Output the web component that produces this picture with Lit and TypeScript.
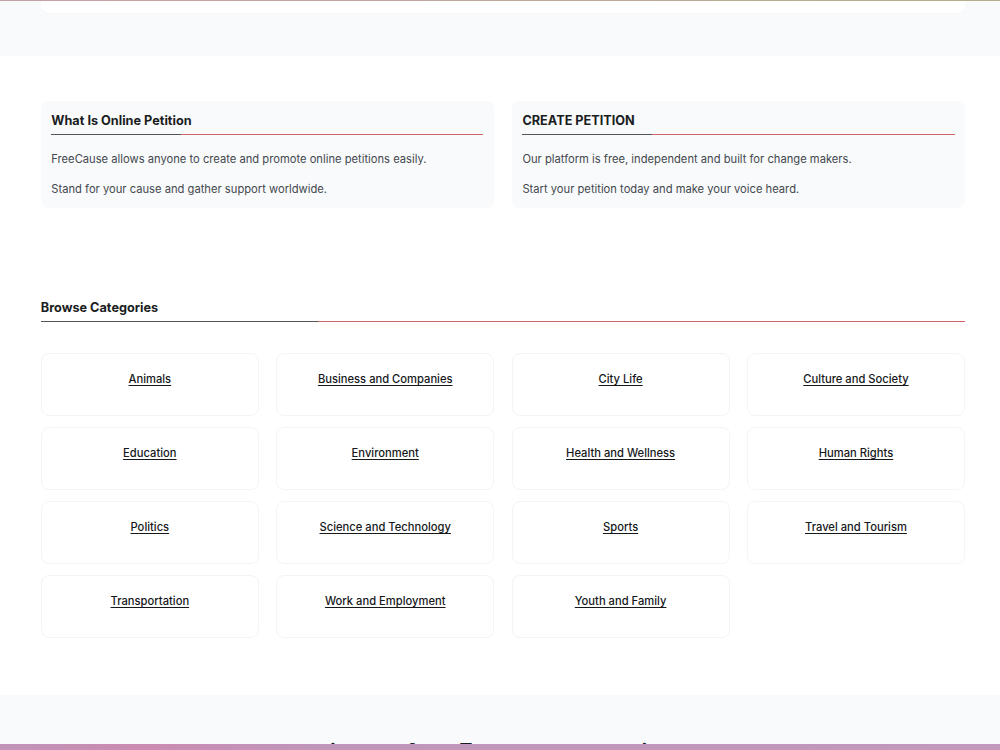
import { html, css, LitElement } from 'lit';
import { customElement } from 'lit/decorators.js';

const CATEGORIES = [
  'Animals',
  'Business and Companies',
  'City Life',
  'Culture and Society',
  'Education',
  'Environment',
  'Health and Wellness',
  'Human Rights',
  'Politics',
  'Science and Technology',
  'Sports',
  'Travel and Tourism',
  'Transportation',
  'Work and Employment',
  'Youth and Family',
];

@customElement('app-root')
export class AppRoot extends LitElement {
  static override styles = css`
    :host {
      display: block;
      height: 750px;
      overflow: hidden;
      position: relative;
      background: #fff;
      font-family: Inter, 'Liberation Sans', sans-serif;
      color: #1a1d21;
    }
    .strip-top {
      position: absolute;
      top: 0;
      left: 0;
      right: 0;
      height: 1px;
      background: linear-gradient(90deg, #c9a0a8, #b3ae8c);
    }
    .strip-bottom {
      position: absolute;
      bottom: 0;
      left: 0;
      right: 0;
      height: 6px;
      background: linear-gradient(90deg, #c094b8 0%, #cb8bb2 14%, #c096bb 32%, #c298bc 100%);
    }
    .hero {
      background: #f9fafc;
      height: 55.5px;
      padding: 0 35px 0 40.8px;
    }
    .hero-card {
      height: 13px;
      background: #fff;
      border-radius: 0 0 8px 8px;
      box-shadow: 0 1px 2px rgba(0, 0, 0, 0.02);
    }
    .intro {
      display: grid;
      grid-template-columns: 1fr 1fr;
      gap: 18px;
      padding: 45.5px 35px 0 40.8px;
    }
    .panel {
      background: #f9fafc;
      border-radius: 8px;
      padding: 10px 10.5px 11px;
      height: 107px;
      box-sizing: border-box;
    }
    h2 {
      margin: 0;
      font-size: 12.7px;
      line-height: 20px;
      font-weight: 700;
      color: #1a1d21;
    }
    .rule {
      height: 1px;
      margin-top: 3px;
      background: linear-gradient(90deg, #555 0, #555 30%, #d06464 30%, #d06464 100%);
    }
    .panel p {
      margin: 16px 0 0;
      font-size: 11.2px;
      line-height: 14px;
      color: #43484e;
    }
    .panel .rule + p {
      margin-top: 17px;
    }
    .browse {
      padding: 90px 35px 0 40.8px;
    }
    .grid {
      display: grid;
      grid-template-columns: repeat(4, 1fr);
      gap: 11px 17.3px;
      margin-top: 31px;
    }
    .tile {
      height: 63px;
      box-sizing: border-box;
      border: 1px solid #f3f4f6;
      border-radius: 8px;
      padding: 13px 8px 0;
      text-align: center;
      background: #fff;
    }
    .tile a {
      font-size: 11.2px;
      line-height: 16px;
      font-weight: 500;
      color: #16181b;
      text-decoration: underline;
      text-underline-offset: 2px;
    }
    .footer-band {
      background: #f9fafc;
      margin-top: 57px;
      height: 80px;
      padding: 43px 0 0 243px;
      box-sizing: border-box;
    }
    .footer-band h3 {
      margin: 0;
      font-size: 24px;
      line-height: 30px;
      font-weight: 600;
      white-space: nowrap;
      color: #1a1d21;
    }
  `;

  override render() {
    return html`
      <section class="hero"><div class="hero-card"></div></section>
      <section class="intro">
        <div class="panel">
          <h2>What Is Online Petition</h2>
          <div class="rule"></div>
          <p>FreeCause allows anyone to create and promote online petitions easily.</p>
          <p>Stand for your cause and gather support worldwide.</p>
        </div>
        <div class="panel">
          <h2>CREATE PETITION</h2>
          <div class="rule"></div>
          <p>Our platform is free, independent and built for change makers.</p>
          <p>Start your petition today and make your voice heard.</p>
        </div>
      </section>
      <section class="browse">
        <h2>Browse Categories</h2>
        <div class="rule"></div>
        <div class="grid">
          ${CATEGORIES.map(
            (c) => html`<div class="tile"><a href="#">${c}</a></div>`
          )}
        </div>
      </section>
      <section class="footer-band">
        <h3>your voice on free Everyone, we win</h3>
      </section>
      <div class="strip-top"></div>
      <div class="strip-bottom"></div>
    `;
  }
}

declare global {
  interface HTMLElementTagNameMap {
    'app-root': AppRoot;
  }
}
